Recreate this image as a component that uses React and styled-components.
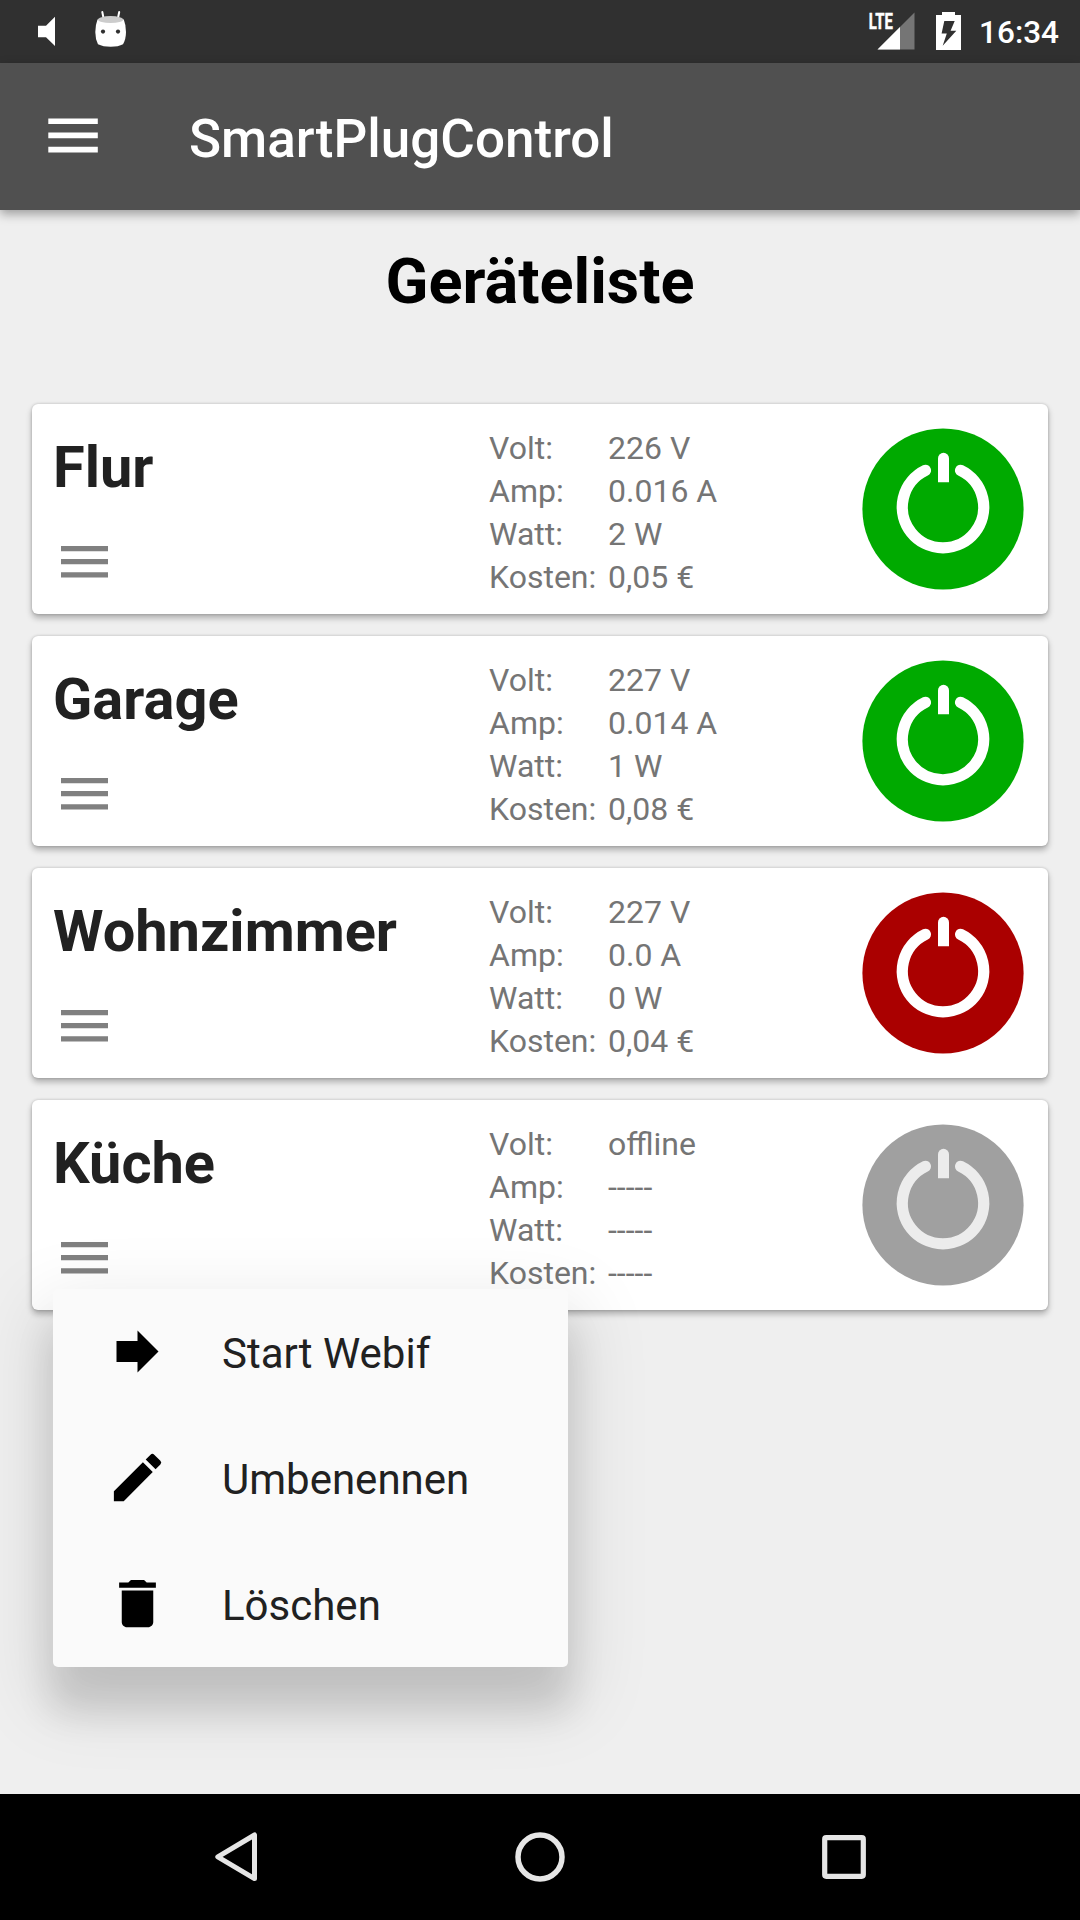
import React, { useState } from "react";
import styled, { createGlobalStyle } from "styled-components";

const GlobalStyle = createGlobalStyle`
  * {
    box-sizing: border-box;
  }

  body {
    margin: 0;
    background: #efefef;
    font-family: Roboto, "Liberation Sans", sans-serif;
  }

  button {
    padding: 0;
    border: none;
    background: none;
    font: inherit;
    cursor: pointer;
  }

  svg {
    display: block;
  }
`;

const Screen = styled.div`
  display: flex;
  flex-direction: column;
  width: 1080px;
  height: 1920px;
  overflow: hidden;
  background: #efefef;
`;

// Top bars
const StatusBar = styled.div`
  display: flex;
  flex: none;
  justify-content: space-between;
  height: 63px;
  background: #303030;
`;

const Clock = styled.span`
  padding-right: 21px;
  color: #fff;
  font-size: 31.5px;
  font-weight: 500;
  line-height: 66px;
`;

const StatusRight = styled.div`
  display: flex;
  gap: 13px;
`;

const Toolbar = styled.header`
  display: flex;
  flex: none;
  align-items: center;
  height: 147px;
  padding-left: 48px;
  background: #505050;
  box-shadow: 0 4px 10px rgba(0, 0, 0, 0.35);
  z-index: 1;
`;

const ToolbarTitle = styled.h1`
  margin: 5px 0 0 91px;
  color: #fff;
  font-size: 53px;
  font-weight: 500;
  line-height: 62px;
`;

// Device list
const Content = styled.main`
  flex: 1;
  padding: 41px 32px 0;
`;

const Heading = styled.h2`
  margin: 0 0 91px;
  color: #000;
  font-size: 63px;
  font-weight: 700;
  line-height: 62px;
  text-align: center;
`;

const DeviceList = styled.div`
  display: flex;
  flex-direction: column;
  gap: 22px;
`;

const Card = styled.section`
  position: relative;
  display: flex;
  height: 210px;
  padding: 22px 24px 0 21px;
  border-radius: 6px;
  background: #fff;
  box-shadow: 0 4px 6px rgba(0, 0, 0, 0.28), 0 0 3px rgba(0, 0, 0, 0.2);
`;

const DeviceInfo = styled.div`
  width: 436px;
`;

const DeviceName = styled.h3`
  margin: 7px 0 45px;
  color: #212121;
  font-size: 57.75px;
  font-weight: 700;
  line-height: 68px;
`;

const MenuButton = styled.button`
  display: block;
  margin-left: 8px;
`;

const Readings = styled.dl`
  display: grid;
  grid-template-columns: 119px 1fr;
  grid-auto-rows: 43px;
  flex: 1;
  margin: 1px 0 0;
  color: #757575;
  font-size: 32px;
  line-height: 43px;
  white-space: nowrap;
`;

const Value = styled.dd`
  margin: 0;
`;

const PowerButton = styled.button`
  width: 162px;
  height: 162px;
  margin-top: 2px;
`;

const Popup = styled.div`
  position: absolute;
  top: 189px;
  left: 21px;
  width: 515px;
  border-radius: 5px;
  background: #fafafa;
  box-shadow: 0 42px 36px 2px rgba(0, 0, 0, 0.12), 0 26px 72px 14px rgba(0, 0, 0, 0.1);
  z-index: 2;
`;

const PopupItem = styled.button`
  display: flex;
  align-items: center;
  gap: 53px;
  width: 100%;
  height: 126px;
  padding: 0 0 1px 53px;
  color: #212121;
  font-size: 42px;
  line-height: 52px;
`;

const PopupLabel = styled.span`
  padding-top: 4px;
`;

// Bottom navigation
const NavBar = styled.nav`
  display: flex;
  flex: none;
  align-items: center;
  justify-content: center;
  gap: 240px;
  height: 126px;
  background: #000;
`;

const devices = [
  { name: "Flur", volt: "226 V", amp: "0.016 A", watt: "2 W", cost: "0,05 €", state: "on" },
  { name: "Garage", volt: "227 V", amp: "0.014 A", watt: "1 W", cost: "0,08 €", state: "on" },
  { name: "Wohnzimmer", volt: "227 V", amp: "0.0 A", watt: "0 W", cost: "0,04 €", state: "off" },
  { name: "Küche", volt: "offline", amp: "-----", watt: "-----", cost: "-----", state: "offline" },
];

const powerColors = {
  on: { disc: "#00aa00", sign: "#fff" },
  off: { disc: "#aa0000", sign: "#fff" },
  offline: { disc: "#a0a0a0", sign: "#ececec" },
};

const StatusLeftIcons = () => (
  <svg width="140" height="63" viewBox="0 0 140 63">
    <path d="M38 25.7h8l9-9V46l-9-8.7h-8z" fill="#fff" />
    <path d="M102.3 12l1.6 8M119.2 12l-1.6 8" stroke="#fff" strokeWidth="2" strokeLinecap="round" />
    <path d="M97.5 19.5Q95.3 25 95.3 32T98 44.3Q103 46.8 110.7 46.8T123 44.3Q126 39 126 32T123.8 19.5z" fill="#fff" />
    <ellipse cx="110.6" cy="19.6" rx="12.8" ry="3.5" fill="#ccc" />
    <circle cx="103" cy="31.6" r="2.1" fill="#303030" />
    <circle cx="118" cy="31.6" r="2.1" fill="#303030" />
  </svg>
);

const StatusRightIcons = () => (
  <svg width="100" height="63" viewBox="866 0 100 63">
    <text
      x="868.8"
      y="29.3"
      textLength="24"
      lengthAdjust="spacingAndGlyphs"
      fill="#fff"
      stroke="#fff"
      strokeWidth="0.5"
      fontSize="22.5"
      fontWeight="700"
    >
      LTE
    </text>
    <path d="M914.5 12.5v37h-37z" fill="#757575" />
    <path d="M900 27v22.5h-22.5z" fill="#fff" />
    <path
      fillRule="evenodd"
      d="M942 12h13v3h6v35h-25V15h6zM944.3 21l-2.7 12.5h5.2L942.7 45.8 956.3 30.7h-5.7L954.7 21z"
      fill="#fff"
    />
  </svg>
);

const ToolbarMenuIcon = () => (
  <svg width="50" height="38" viewBox="0 0 50 38">
    <path d="M0.3 0.4h49.5v5.7H0.3zM0.3 14.6h49.5v5.7H0.3zM0.3 28.8h49.5v5.7H0.3z" fill="#fff" />
  </svg>
);

const CardMenuIcon = () => (
  <svg width="47" height="32" viewBox="0 0 47 32">
    <path d="M0 0h47v5.2H0zM0 13.1h47v5.2H0zM0 26.2h47v5.2H0z" fill="#808080" />
  </svg>
);

const PowerIcon = ({ state }) => {
  const { disc, sign } = powerColors[state];
  return (
    <svg width="162" height="162" viewBox="0 0 162 162">
      <circle cx="81" cy="81" r="80.6" fill={disc} />
      <path
        d="M63.4 42.4A40.7 40.7 0 1 0 98.6 42.4"
        fill="none"
        stroke={sign}
        strokeWidth="11.3"
        strokeLinecap="round"
      />
      <path d="M76 54.3V30.3a5.5 5.5 0 0 1 11 0v24z" fill={sign} />
    </svg>
  );
};

const menuItems = [
  { label: "Start Webif", path: "M4 8h8V4l8 8-8 8v-4H4z" },
  {
    label: "Umbenennen",
    path: "M3 17.25V21h3.75L17.81 9.94l-3.75-3.75L3 17.25zM20.71 7.04a1 1 0 0 0 0-1.41l-2.34-2.34a1 1 0 0 0-1.41 0l-1.83 1.83 3.75 3.75 1.83-1.83z",
  },
  {
    label: "Löschen",
    path: "M6 19c0 1.1.9 2 2 2h8c1.1 0 2-.9 2-2V7H6v12zM19 4h-3.5l-1-1h-5l-1 1H5v2h14V4z",
  },
];

const DeviceMenu = ({ onSelect }) => (
  <Popup>
    {menuItems.map((item) => (
      <PopupItem key={item.label} onClick={onSelect}>
        <svg width="63" height="63" viewBox="0 0 24 24">
          <path d={item.path} fill="#000" />
        </svg>
        <PopupLabel>{item.label}</PopupLabel>
      </PopupItem>
    ))}
  </Popup>
);

const DeviceCard = ({ device, menuOpen, onToggleMenu }) => (
  <Card>
    <DeviceInfo>
      <DeviceName>{device.name}</DeviceName>
      <MenuButton onClick={onToggleMenu}>
        <CardMenuIcon />
      </MenuButton>
    </DeviceInfo>
    <Readings>
      <dt>Volt:</dt>
      <Value>{device.volt}</Value>
      <dt>Amp:</dt>
      <Value>{device.amp}</Value>
      <dt>Watt:</dt>
      <Value>{device.watt}</Value>
      <dt>Kosten:</dt>
      <Value>{device.cost}</Value>
    </Readings>
    <PowerButton>
      <PowerIcon state={device.state} />
    </PowerButton>
    {menuOpen && <DeviceMenu onSelect={onToggleMenu} />}
  </Card>
);

const App = () => {
  const [openMenu, setOpenMenu] = useState("Küche");

  const toggleMenu = (name) => {
    setOpenMenu(openMenu === name ? null : name);
  };

  return (
    <Screen>
      <GlobalStyle />
      <StatusBar>
        <StatusLeftIcons />
        <StatusRight>
          <StatusRightIcons />
          <Clock>16:34</Clock>
        </StatusRight>
      </StatusBar>
      <Toolbar>
        <ToolbarMenuIcon />
        <ToolbarTitle>SmartPlugControl</ToolbarTitle>
      </Toolbar>
      <Content>
        <Heading>Geräteliste</Heading>
        <DeviceList>
          {devices.map((device) => (
            <DeviceCard
              key={device.name}
              device={device}
              menuOpen={openMenu === device.name}
              onToggleMenu={() => toggleMenu(device.name)}
            />
          ))}
        </DeviceList>
      </Content>
      <NavBar>
        <svg width="64" height="64" viewBox="0 0 64 64" fill="none" stroke="#e6e6e6" strokeWidth="5" strokeLinejoin="round">
          <path d="M50.5 10v43.6L13.8 31.8z" />
        </svg>
        <svg width="64" height="64" viewBox="0 0 64 64" fill="none" stroke="#e6e6e6" strokeWidth="5.5">
          <circle cx="32" cy="32" r="22" />
        </svg>
        <svg width="64" height="64" viewBox="0 0 64 64" fill="none" stroke="#e6e6e6" strokeWidth="5.2">
          <rect x="12.7" y="12.7" width="38.6" height="38.6" rx="1.5" />
        </svg>
      </NavBar>
    </Screen>
  );
};

export default App;
